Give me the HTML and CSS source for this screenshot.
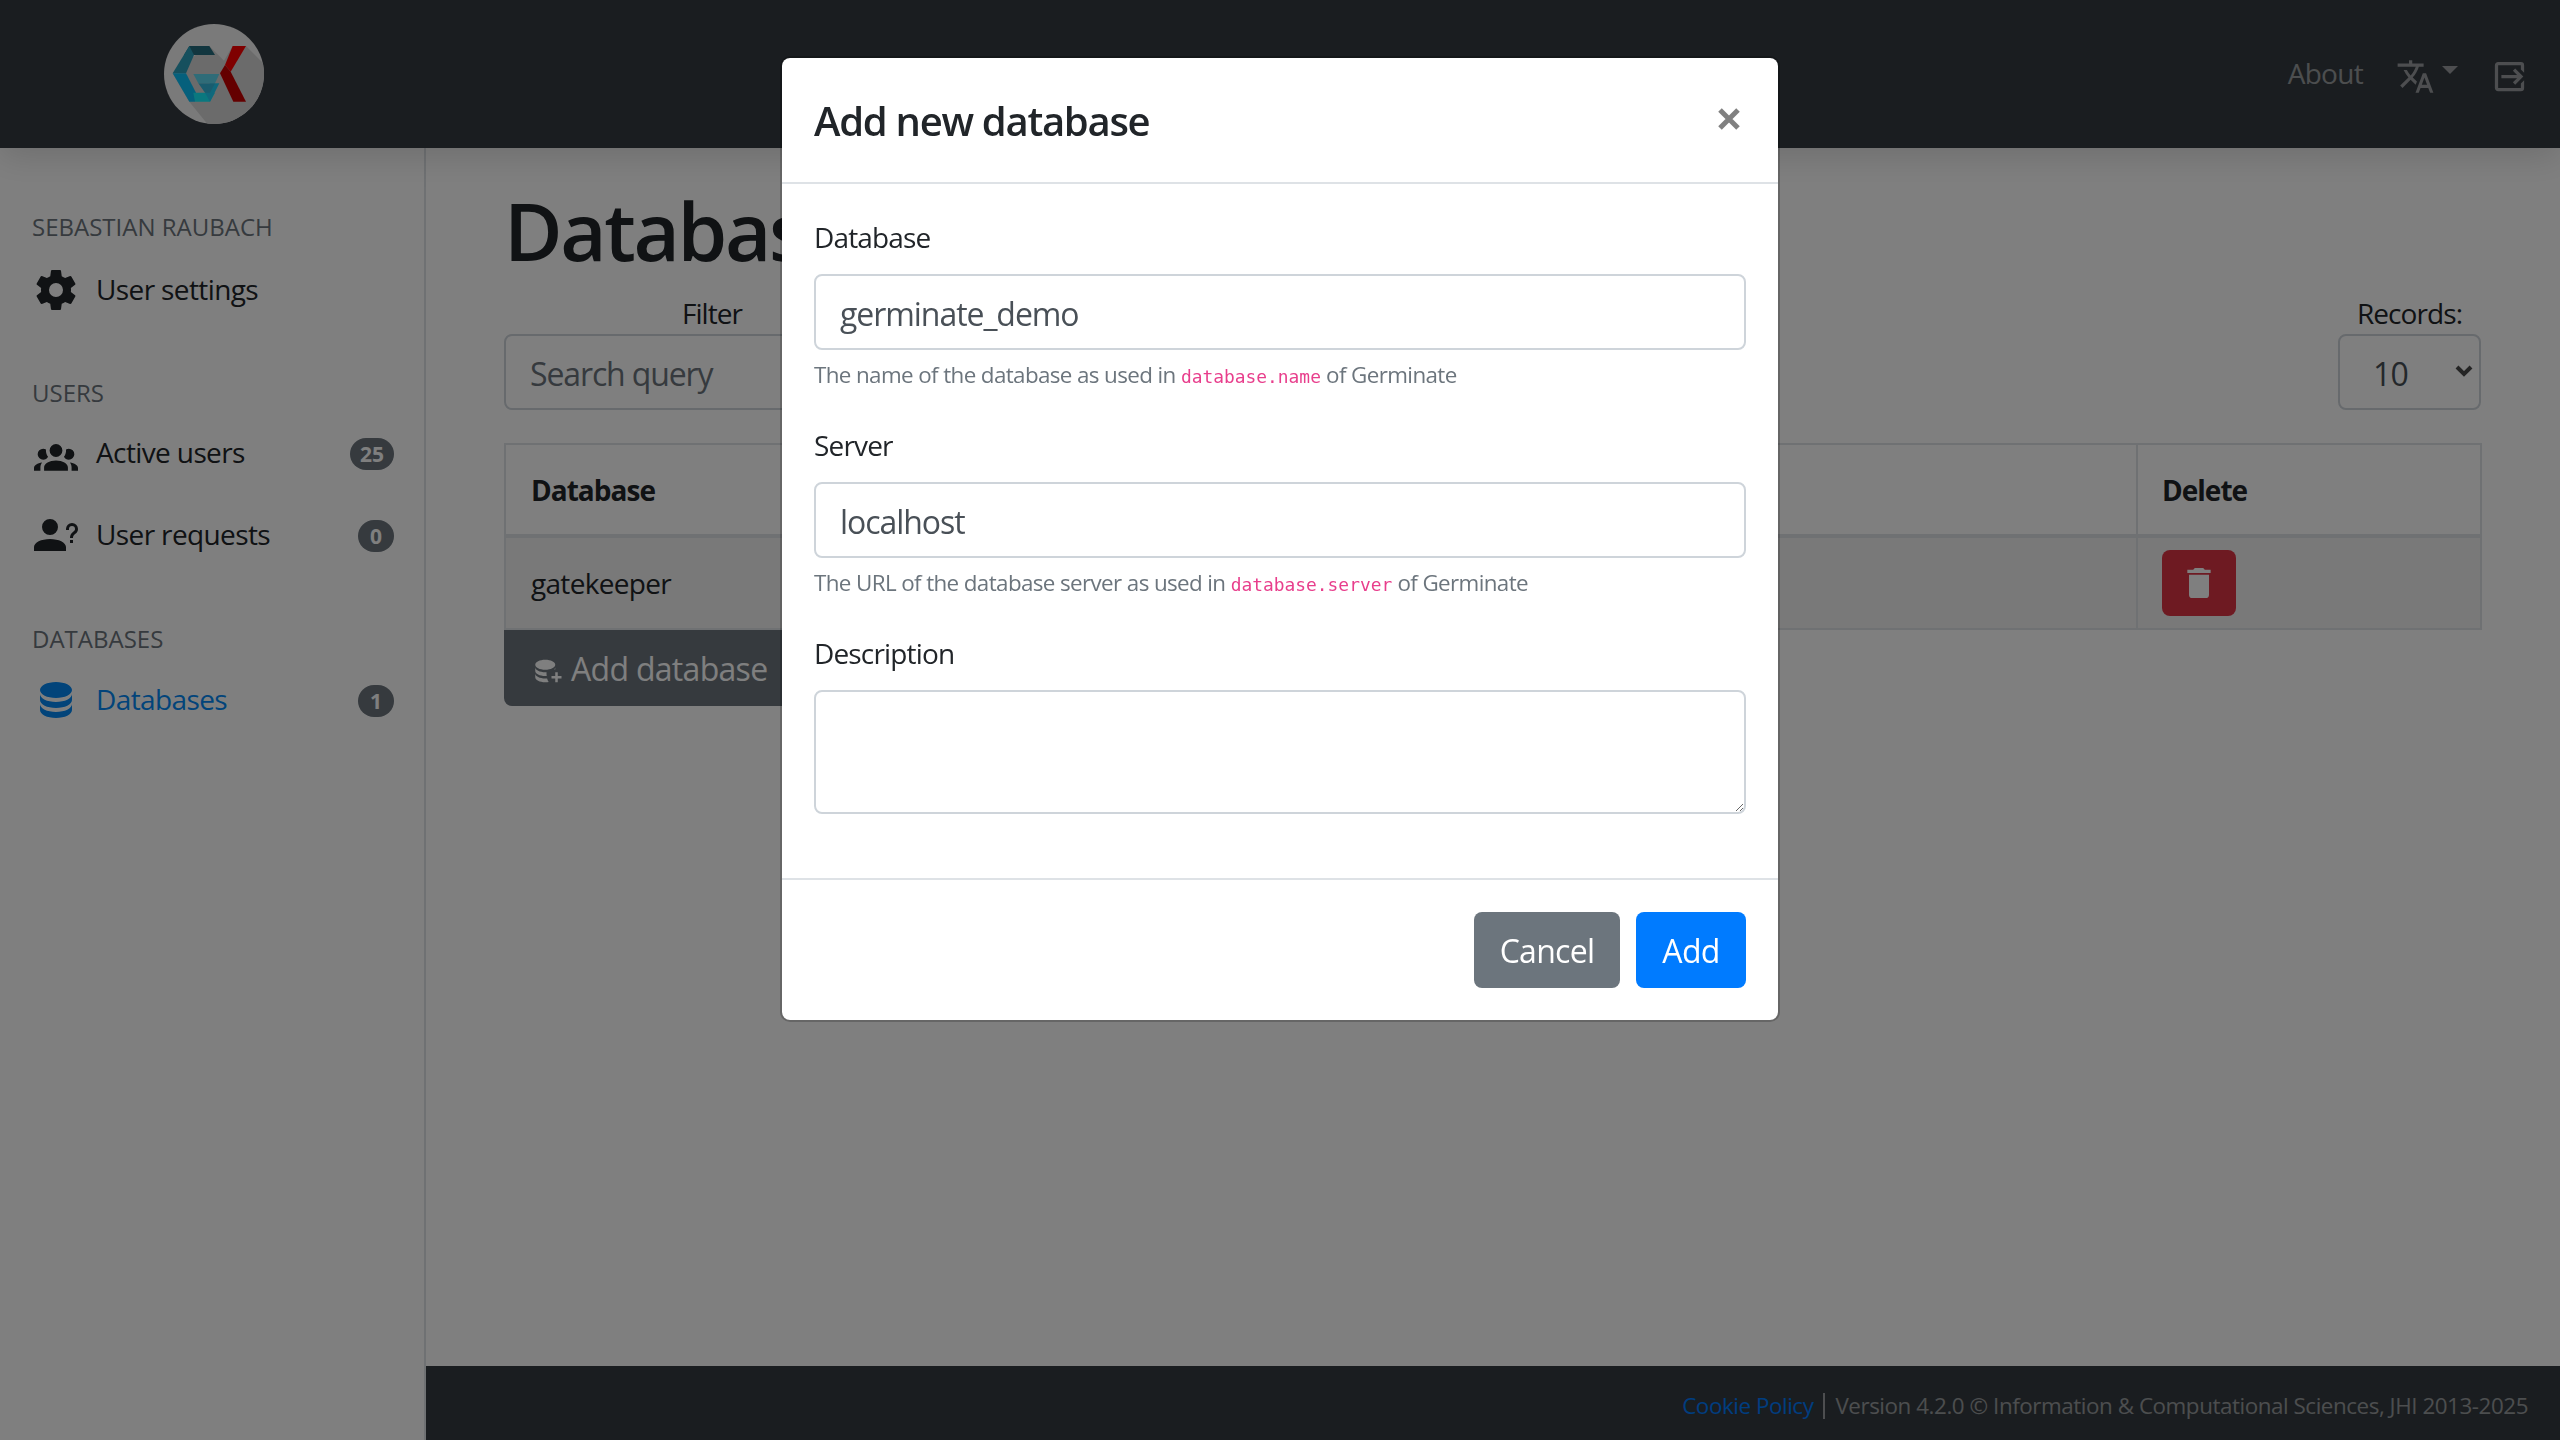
FILE: index.html
```html
<!DOCTYPE html>
<html lang="en">
<head>
<meta charset="utf-8">
<title>Gatekeeper</title>
<link rel="stylesheet" href="styles.css">
</head>
<body>
<div class="app">
  <header class="topbar">
    <div class="brand">
      <svg class="logo" viewBox="12 12 300 300">
        <defs><clipPath id="disc"><circle cx="162" cy="162" r="150"/></clipPath></defs>
        <circle cx="162" cy="162" r="150" fill="#f4f4f4"/>
        <polygon clip-path="url(#disc)" points="148,78 192,122 218,78 258,78 340,160 340,340 165,340 88,245 38,160 100,110" fill="#d6d6d6"/>
        <polygon points="88,78 148,78 165,105 72,105" fill="#246c7e"/>
        <polygon points="88,78 102,105 78,160 38,160" fill="#2ca0bc"/>
        <polygon points="38,160 78,160 108,218 105,245 88,245" fill="#0ac0f8"/>
        <polygon points="100,218 165,218 150,245 105,245" fill="#14f0ff"/>
        <polygon points="150,190 178,190 150,245 135,218" fill="#20d0f8"/>
        <polygon points="115,190 165,190 150,218 135,218" fill="#34b8dc"/>
        <polygon points="100,162 178,162 165,190 115,190" fill="#5ed8f0"/>
        <polygon points="218,78 258,78 212,155 195,135" fill="#ff0000"/>
        <polygon points="195,135 212,155 258,245 220,245 180,160" fill="#c80000"/>
      </svg>
    </div>
    <nav class="topnav">
      <a class="toplink">About</a>
      <span class="lang">
        <svg class="topicon" viewBox="0 0 24 24"><path d="M12.87,15.07L10.33,12.56L10.36,12.53C12.1,10.59 13.34,8.36 14.07,6H17V4H10V2H8V4H1V6H12.17C11.5,7.92 10.44,9.75 9,11.35C8.07,10.32 7.3,9.19 6.69,8H4.69C5.42,9.63 6.42,11.17 7.67,12.56L2.58,17.58L4,19L9,14L12.11,17.11L12.87,15.07M18.5,10H16.5L12,22H14L15.12,19H19.87L21,22H23L18.5,10M15.88,17L17.5,12.67L19.12,17H15.88Z"/></svg>
        <span class="caret"></span>
      </span>
      <svg class="topicon exit" viewBox="0 0 24 24"><path d="M14.08,15.59L16.67,13H7V11H16.67L14.08,8.41L15.5,7L20.5,12L15.5,17L14.08,15.59M19,3A2,2 0 0,1 21,5V9.67L19,7.67V5H5V19H19V16.33L21,14.33V19A2,2 0 0,1 19,21H5C3.89,21 3,20.1 3,19V5C3,3.89 3.89,3 5,3H19Z"/></svg>
    </nav>
  </header>
  <div class="shell">
    <aside class="sidebar">
      <h6 class="side-head head-user">SEBASTIAN RAUBACH</h6>
      <a class="side-link link-settings">
        <span class="icon-box"><svg class="side-icon" viewBox="0 0 24 24"><path d="M12,15.5A3.5,3.5 0 0,1 8.5,12A3.5,3.5 0 0,1 12,8.5A3.5,3.5 0 0,1 15.5,12A3.5,3.5 0 0,1 12,15.5M19.43,12.97C19.47,12.65 19.5,12.33 19.5,12C19.5,11.67 19.47,11.34 19.43,11L21.54,9.37C21.73,9.22 21.78,8.95 21.66,8.73L19.66,5.27C19.54,5.05 19.27,4.96 19.05,5.05L16.56,6.05C16.04,5.66 15.5,5.32 14.87,5.07L14.5,2.42C14.46,2.18 14.25,2 14,2H10C9.75,2 9.54,2.18 9.5,2.42L9.13,5.07C8.5,5.32 7.96,5.66 7.44,6.05L4.95,5.05C4.73,4.96 4.46,5.05 4.34,5.27L2.34,8.73C2.21,8.95 2.27,9.22 2.46,9.37L4.57,11C4.53,11.34 4.5,11.67 4.5,12C4.5,12.33 4.53,12.65 4.57,12.97L2.46,14.63C2.27,14.78 2.21,15.05 2.34,15.27L4.34,18.73C4.46,18.95 4.73,19.03 4.95,18.95L7.44,17.94C7.96,18.34 8.5,18.68 9.13,18.93L9.5,21.58C9.54,21.82 9.75,22 10,22H14C14.25,22 14.46,21.82 14.5,21.58L14.87,18.93C15.5,18.67 16.04,18.34 16.56,17.94L19.05,18.95C19.27,19.03 19.54,18.95 19.66,18.73L21.66,15.27C21.78,15.05 21.73,14.78 21.54,14.63L19.43,12.97Z"/></svg></span>
        <span class="side-label">User settings</span>
      </a>
      <h6 class="side-head head-users">USERS</h6>
      <a class="side-link link-active">
        <span class="icon-box"><svg class="side-icon icon-group" viewBox="0 0 24 24"><path d="M12,5.5A3.5,3.5 0 0,1 15.5,9A3.5,3.5 0 0,1 12,12.5A3.5,3.5 0 0,1 8.5,9A3.5,3.5 0 0,1 12,5.5M5,8C5.56,8 6.08,8.15 6.53,8.42C6.38,9.85 6.8,11.27 7.66,12.38C7.16,13.34 6.16,14 5,14A3,3 0 0,1 2,11A3,3 0 0,1 5,8M19,8A3,3 0 0,1 22,11A3,3 0 0,1 19,14C17.84,14 16.84,13.34 16.34,12.38C17.2,11.27 17.62,9.85 17.47,8.42C17.92,8.15 18.44,8 19,8M5.5,18.25C5.5,16.18 8.41,14.5 12,14.5C15.59,14.5 18.5,16.18 18.5,18.25V20H5.5V18.25M0,20V18.5C0,17.11 1.89,15.94 4.45,15.6C3.86,16.28 3.5,17.22 3.5,18.25V20H0M24,20H20.5V18.25C20.5,17.22 20.14,16.28 19.55,15.6C22.11,15.94 24,17.11 24,18.5V20Z"/></svg></span>
        <span class="side-label">Active users</span>
        <b class="badge">25</b>
      </a>
      <a class="side-link link-requests">
        <span class="icon-box"><svg class="side-icon" viewBox="0 0 24 24"><path d="M13,8A4,4 0 0,1 9,12A4,4 0 0,1 5,8A4,4 0 0,1 9,4A4,4 0 0,1 13,8M17,18V20H1V18C1,15.79 4.58,14 9,14C13.42,14 17,15.79 17,18M20.5,14.5V16H19V14.5H20.5M18.5,9.5H17V9A3,3 0 0,1 20,6A3,3 0 0,1 23,9C23,9.97 22.5,10.88 21.71,11.41L21.41,11.6C20.84,12 20.5,12.61 20.5,13.3V13.5H19V13.3C19,12.11 19.6,11 20.59,10.35L20.88,10.16C21.27,9.9 21.5,9.47 21.5,9A1.5,1.5 0 0,0 20,7.5A1.5,1.5 0 0,0 18.5,9V9.5Z"/></svg></span>
        <span class="side-label">User requests</span>
        <b class="badge">0</b>
      </a>
      <h6 class="side-head head-db">DATABASES</h6>
      <a class="side-link link-db active">
        <span class="icon-box"><svg class="side-icon" viewBox="0 0 24 24"><path d="M12,3C7.58,3 4,4.79 4,7C4,9.21 7.58,11 12,11C16.42,11 20,9.21 20,7C20,4.79 16.42,3 12,3M4,9V12C4,14.21 7.58,16 12,16C16.42,16 20,14.21 20,12V9C20,11.21 16.42,13 12,13C7.58,13 4,11.21 4,9M4,14V17C4,19.21 7.58,21 12,21C16.42,21 20,19.21 20,17V14C20,16.21 16.42,18 12,18C7.58,18 4,16.21 4,14Z"/></svg></span>
        <span class="side-label">Databases</span>
        <b class="badge">1</b>
      </a>
    </aside>
    <div class="content">
      <main class="main">
        <h1 class="page-title">Databases</h1>
        <div class="filters">
          <div class="field filter-field">
            <label class="field-label">Filter</label>
            <input class="page-input" type="text" placeholder="Search query">
          </div>
          <div class="field records-field">
            <label class="field-label">Records:</label>
            <div class="select-wrap">
              <select class="page-select"><option>10</option></select>
              <svg class="chevron" viewBox="0 0 18 12"><path d="M2,2L9,9L16,2"/></svg>
            </div>
          </div>
        </div>
        <table class="db-table">
          <thead>
            <tr><th class="col-name">Database</th><th class="col-server">Server</th><th>Description</th><th class="col-del">Delete</th></tr>
          </thead>
          <tbody>
            <tr>
              <td>gatekeeper</td><td>localhost</td><td></td>
              <td><button class="del-btn"><svg viewBox="0 0 24 24"><path d="M19,4H15.5L14.5,3H9.5L8.5,4H5V6H19M6,19A2,2 0 0,0 8,21H16A2,2 0 0,0 18,19V7H6V19Z"/></svg></button></td>
            </tr>
          </tbody>
        </table>
        <button class="add-btn">
          <svg viewBox="0 0 24 24"><path d="M9,3C4.58,3 1,4.79 1,7C1,9.21 4.58,11 9,11C13.42,11 17,9.21 17,7C17,4.79 13.42,3 9,3M1,9V12C1,14.21 4.58,16 9,16C9.4,16 9.8,15.98 10.2,15.95C10.07,15.32 10,14.67 10,14C10,13.67 10.02,13.34 10.05,13C9.71,13 9.36,13 9,13C4.58,13 1,11.21 1,9M17,9C17,9.6 16.7,10.2 16.2,10.75C16.5,10.7 16.7,10.7 17,10.7V9M1,14V17C1,19.21 4.58,21 9,21C9.98,21 10.9,20.91 11.77,20.75C11.2,20 10.8,19.1 10.5,18C10,18 9.5,18 9,18C4.58,18 1,16.21 1,14M17,13V16H14V18H17V21H19V18H22V16H19V13H17Z"/></svg>
          <span>Add database</span>
        </button>
      </main>
      <footer class="footer">
        <a class="footer-link">Cookie Policy</a><span class="footer-sep"></span><span>Version 4.2.0 © Information &amp; Computational Sciences, JHI 2013-2025</span>
      </footer>
    </div>
  </div>
</div>
<div class="backdrop"></div>
<div class="modal" role="dialog">
  <div class="modal-head">
    <h5 class="modal-title">Add new database</h5>
    <svg class="modal-close" viewBox="0 0 22 22"><path d="M2,2L20,20M20,2L2,20"/></svg>
  </div>
  <div class="modal-body">
    <div class="form-group">
      <label class="form-label">Database</label>
      <input class="form-input" type="text" value="germinate_demo">
      <small class="help">The name of the database as used in <code>database.name</code> of Germinate</small>
    </div>
    <div class="form-group">
      <label class="form-label">Server</label>
      <input class="form-input" type="text" value="localhost">
      <small class="help">The URL of the database server as used in <code>database.server</code> of Germinate</small>
    </div>
    <div class="form-group">
      <label class="form-label">Description</label>
      <textarea class="form-input form-area"></textarea>
    </div>
  </div>
  <div class="modal-foot">
    <button class="btn btn-cancel">Cancel</button>
    <button class="btn btn-add">Add</button>
  </div>
</div>
</body>
</html>
```

FILE: styles.css
```css
* { box-sizing: border-box; }
html, body { margin: 0; height: 100%; overflow: hidden; }
body {
  font-family: "Open Sans", "Noto Sans", sans-serif;
  font-size: 28px;
  line-height: 1.5;
  color: #212529;
  background: #fff;
  letter-spacing: -0.025em;
}
button, input, select, textarea { font-family: inherit; letter-spacing: inherit; }
svg { fill: currentColor; display: block; flex: none; }

.app { height: 100vh; display: flex; flex-direction: column; }
.topbar {
  height: 148px; flex: none; background: #343a40; display: flex; align-items: center;
  position: relative; z-index: 2; box-shadow: 0 8px 32px rgba(0,0,0,.14);
}
.brand { width: 426px; display: flex; justify-content: center; }
.logo { width: 100px; height: 100px; margin-left: 2px; }
.topnav {
  margin-left: auto; display: flex; align-items: center; padding-right: 31px;
  color: rgba(255,255,255,.5);
}
.toplink { font-size: 28px; margin-right: 33px; margin-left: 2px; margin-top: -2px; }
.lang { display: flex; align-items: center; margin-right: 32px; }
.topicon { width: 39px; height: 39px; }
.lang .topicon { margin-top: 4px; }
.exit { margin-top: 4px; }
.caret {
  width: 0; height: 0; margin-left: 7px; margin-top: -8px;
  border-left: 8px solid transparent; border-right: 8px solid transparent; border-top: 8px solid currentColor;
}

.shell { flex: 1; display: flex; min-height: 0; }
.sidebar { width: 426px; flex: none; border-right: 2px solid #dee2e6; padding: 0 30px 0 32px; display: flex; flex-direction: column; }
.side-head { margin: 0; font-size: 24px; font-weight: 500; color: #6c757d; line-height: 36px; height: 36px; letter-spacing: 0; }
.head-user { margin-top: 61px; }
.head-users { margin-top: 60px; }
.head-db { margin-top: 61px; }
.side-link { display: flex; align-items: center; height: 50px; color: #212529; letter-spacing: -0.022em; }
.link-settings { margin-top: 20px; }
.link-active { margin-top: 17px; }
.link-requests { margin-top: 32px; }
.link-db { margin-top: 18px; }
.icon-box { width: 64px; height: 48px; flex: none; }
.side-icon { width: 48px; height: 48px; }
.icon-group { width: 44px; height: 44px; margin: 5px 0 0 2px; }
.side-label { margin-top: -3px; }
.side-link .badge { margin-left: auto; margin-top: 2px; }
.side-link.active { color: #0489f5; }
.badge {
  height: 32px; min-width: 36px; padding: 0 10px; border-radius: 16px; background: #6c757d; color: #fff;
  font-size: 21px; font-weight: 700; line-height: 32px; text-align: center; letter-spacing: 0;
}

.content { flex: 1; min-width: 0; display: flex; flex-direction: column; }
.main { flex: 1; padding: 0 78px; min-height: 0; }
.page-title { margin: 0; padding-top: 34px; font-size: 80px; font-weight: 600; line-height: 96px; height: 144px; letter-spacing: -0.03em; }
.filters { display: flex; justify-content: space-between; padding-right: 1px; }
.field { display: flex; flex-direction: column; }
.filter-field { width: 416px; }
.records-field { width: 143px; }
.field-label { text-align: center; line-height: 42px; height: 42px; letter-spacing: -0.033em; }
.page-input {
  height: 76px; width: 100%; border: 2px solid #ced4da; border-radius: 8px; background: #fff;
  font-size: 32px; padding: 2px 24px 0; color: #495057; outline: none; letter-spacing: -0.035em;
}
.page-input::placeholder { color: #6c757d; opacity: 1; }
.select-wrap { position: relative; height: 76px; }
.page-select {
  appearance: none; height: 76px; width: 100%; border: 2px solid #ced4da; border-radius: 8px; background: #fff;
  font-size: 32px; padding: 2px 0 0 33px; color: #495057; outline: none;
}
.chevron { position: absolute; right: 8px; top: 31px; width: 18px; height: 12px; fill: none; stroke: #4a4a4a; stroke-width: 4; }
.db-table { width: 100%; border-collapse: collapse; margin-top: 33px; table-layout: fixed; }
.db-table th, .db-table td { border: 2px solid #dee2e6; padding: 12px 24px; text-align: left; }
.db-table th { padding: 24px 24px 23px; font-weight: 700; border-bottom-width: 4px; letter-spacing: -0.035em; }
.db-table th:first-child, .db-table td:first-child { padding-left: 25px; }
.db-table th:not(:last-child), .db-table td:not(:last-child) { border-right: 0; }
.db-table td:not(:last-child) { border-left: 2px solid #f2f2f2; }
.db-table td:first-child { border-left-color: #dee2e6; }
.db-table td { background: #f2f2f2; }
.col-name { width: 560px; }
.col-server { width: 416px; }
.col-del { width: 344px; }
.del-btn {
  width: 74px; height: 66px; border: 0; border-radius: 8px; background: #dc3545; color: #fff;
  display: flex; align-items: center; justify-content: center; padding: 0;
}
.del-btn svg { width: 40px; height: 40px; }
.add-btn {
  display: flex; align-items: center; height: 76px; width: 320px; border: 0; background: #6c757d; color: #fff;
  border-radius: 0 0 8px 8px; font-size: 32px; padding: 0 24px;
}
.add-btn svg { width: 30px; height: 30px; margin: 6px 7px 0 6px; }

.footer {
  height: 74px; flex: none; background: #343a40; color: rgba(255,255,255,.5);
  display: flex; align-items: center; justify-content: flex-end; padding: 5px 32px 0 0; font-size: 22.4px; letter-spacing: -0.02em;
}
.footer-link { color: #007bff; }
.footer-sep { width: 2px; height: 26px; margin: 0 10px; background: rgba(255,255,255,.5); }

.backdrop { position: fixed; inset: 0; background: #000; opacity: .5; z-index: 10; }
.modal {
  position: fixed; top: 56px; left: 780px; width: 1000px; z-index: 20; background: #fff;
  border: 2px solid rgba(0,0,0,.2); border-radius: 10px; background-clip: padding-box;
}
.modal-head { display: flex; align-items: center; justify-content: space-between; padding: 32px; border-bottom: 2px solid #dee2e6; height: 126px; }
.modal-title { margin: 0; font-size: 40px; font-weight: 600; line-height: 60px; padding-top: 2px; letter-spacing: -0.032em; }
.modal-close { width: 22px; height: 22px; fill: none; stroke: #808080; stroke-width: 5; margin-right: 6px; margin-top: -2px; }
.modal-body { padding: 32px 32px 32px; }
.form-group { margin-bottom: 32px; display: flex; flex-direction: column; }
.form-label { line-height: 42px; height: 42px; margin-bottom: 16px; letter-spacing: -0.03em; }
.form-input {
  height: 76px; flex: none; width: 100%; border: 2px solid #ced4da; border-radius: 8px; background: #fff;
  font-size: 32px; padding: 2px 24px 0; color: #495057; outline: none; letter-spacing: -0.033em;
}
.form-area { height: 124px; }
.help { display: block; height: 34px; font-size: 22.4px; line-height: 33.6px; margin-top: 8px; color: #6c757d; letter-spacing: -0.0275em; }
code { font-family: "DejaVu Sans Mono", monospace; font-size: 17.9px; line-height: 1; color: #e83e8c; letter-spacing: 0; }
.modal-foot { border-top: 2px solid #dee2e6; padding: 32px; display: flex; justify-content: flex-end; gap: 16px; }
.btn { height: 76px; border: 0; border-radius: 8px; font-size: 32px; color: #fff; padding: 0; }
.btn-cancel { background: #6c757d; width: 146px; }
.btn-add { background: #007bff; width: 110px; }
```
